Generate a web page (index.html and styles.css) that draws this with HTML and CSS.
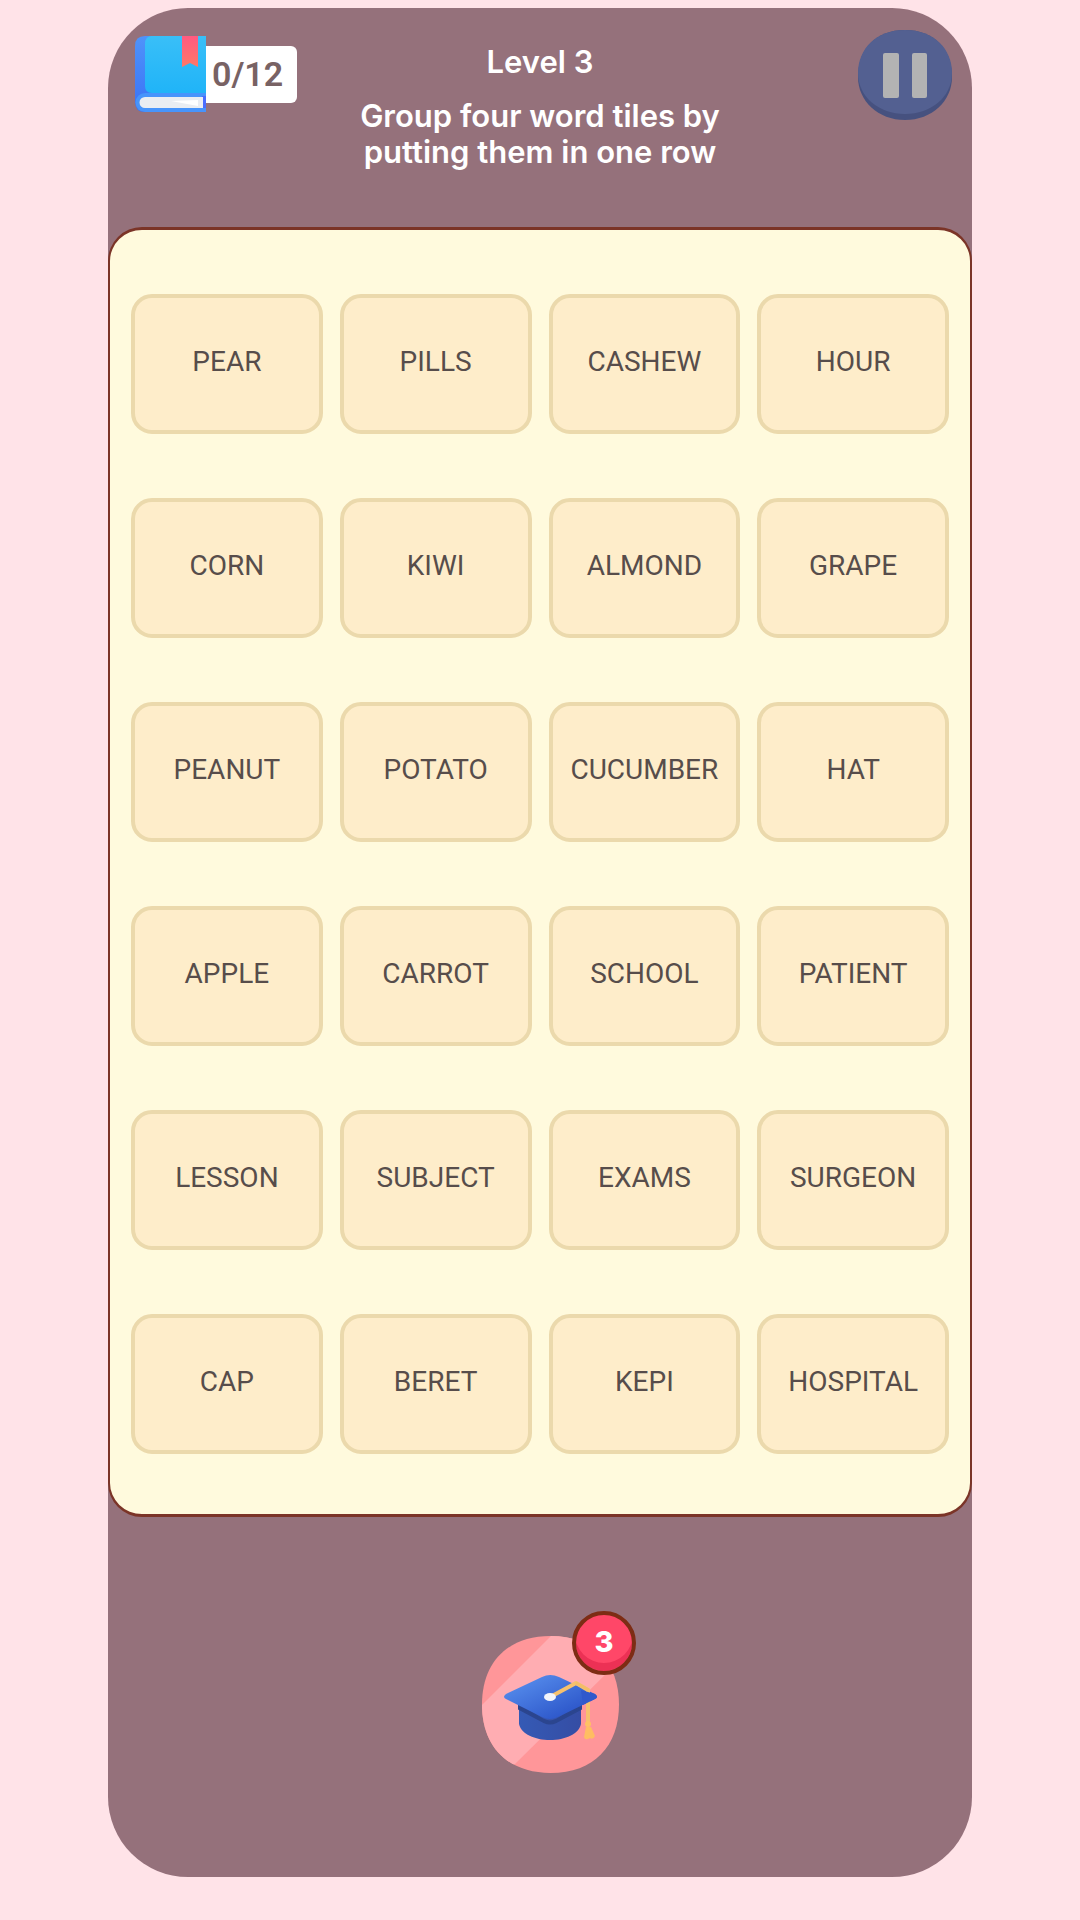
FILE: index.html
```html
<!DOCTYPE html>
<html lang="en">
<head>
  <meta charset="UTF-8">
  <meta name="viewport" content="width=device-width, initial-scale=1.0">
  <title>Word Groups</title>
  <link rel="stylesheet" href="styles.css">
</head>
<body>

  <main class="game">
    <header class="header">
      <div class="counter">
        <svg class="book" viewBox="0 0 71 76" aria-hidden="true">
          <defs>
            <linearGradient id="spine" x1="0" y1="0" x2="0" y2="1">
              <stop offset="0" stop-color="#4f93fa"/>
              <stop offset="1" stop-color="#3a72f5"/>
            </linearGradient>
            <linearGradient id="cover" x1="0" y1="0" x2="0" y2="1">
              <stop offset="0" stop-color="#39bff8"/>
              <stop offset="1" stop-color="#20b4f8"/>
            </linearGradient>
            <linearGradient id="ribbon" x1="0" y1="0" x2="0" y2="1">
              <stop offset="0" stop-color="#ff5a80"/>
              <stop offset="1" stop-color="#ff7868"/>
            </linearGradient>
          </defs>
          <path d="M10 0H71V76H10Q0 76 0 66V10Q0 0 10 0Z" fill="url(#spine)"/>
          <path d="M10 57H71V76H10A9.500 9.500 0 0 1 10 57Z" fill="#4794fb"/>
          <path d="M17 0H71V57H17Q10 57 10 50V8Q10 0 17 0Z" fill="url(#cover)"/>
          <path d="M67 60H71V72H67Z" fill="#4a6dff"/>
          <path d="M10 61H68V72H10A5.500 5.500 0 0 1 10 61Z" fill="#eaedf2"/>
          <path d="M36 65L63 64V70Z" fill="#fff"/>
          <path d="M47 0H63V31L55 27L47 31Z" fill="url(#ribbon)"/>
        </svg>
        <span class="count">0/12</span>
      </div>

      <div class="intro">
        <h1>Level 3</h1>
        <p>Group four word tiles by<br>putting them in one row</p>
      </div>

      <button class="pause" type="button" aria-label="Pause">
        <svg viewBox="0 0 94 90" aria-hidden="true">
          <path d="M47 0C76 0 94 19 94 47C94 71 74 90 47 90S0 71 0 47C0 19 18 0 47 0Z" fill="#46517f"/>
          <path d="M47 0C76 0 94 19 94 43C94 67 73 84 47 84S0 67 0 43C0 19 18 0 47 0Z" fill="#536091"/>
          <rect x="25" y="23" width="16" height="45" rx="2" fill="#b3b3b3"/>
          <rect x="54" y="23" width="15" height="45" rx="2" fill="#b3b3b3"/>
        </svg>
      </button>
    </header>

    <section class="board">
      <button class="tile" type="button">PEAR</button>
      <button class="tile" type="button">PILLS</button>
      <button class="tile" type="button">CASHEW</button>
      <button class="tile" type="button">HOUR</button>

      <button class="tile" type="button">CORN</button>
      <button class="tile" type="button">KIWI</button>
      <button class="tile" type="button">ALMOND</button>
      <button class="tile" type="button">GRAPE</button>

      <button class="tile" type="button">PEANUT</button>
      <button class="tile" type="button">POTATO</button>
      <button class="tile" type="button">CUCUMBER</button>
      <button class="tile" type="button">HAT</button>

      <button class="tile" type="button">APPLE</button>
      <button class="tile" type="button">CARROT</button>
      <button class="tile" type="button">SCHOOL</button>
      <button class="tile" type="button">PATIENT</button>

      <button class="tile" type="button">LESSON</button>
      <button class="tile" type="button">SUBJECT</button>
      <button class="tile" type="button">EXAMS</button>
      <button class="tile" type="button">SURGEON</button>

      <button class="tile" type="button">CAP</button>
      <button class="tile" type="button">BERET</button>
      <button class="tile" type="button">KEPI</button>
      <button class="tile" type="button">HOSPITAL</button>
    </section>

    <footer class="footer">
      <button class="hint" type="button" aria-label="Hint, 3 left">
        <svg class="cap" viewBox="0 0 137 137" aria-hidden="true">
          <defs>
            <clipPath id="round">
              <path d="M68.500 0C112 0 137 27 137 68.500S112 137 68.500 137S0 110 0 68.500S25 0 68.500 0Z"/>
            </clipPath>
            <linearGradient id="top" x1="0" y1="0" x2="1" y2="1">
              <stop offset="0.200" stop-color="#5186e8"/>
              <stop offset="0.800" stop-color="#2d57ca"/>
            </linearGradient>
            <linearGradient id="base" x1="0" y1="0" x2="1" y2="0">
              <stop offset="0" stop-color="#355ab5"/>
              <stop offset="1" stop-color="#354da4"/>
            </linearGradient>
          </defs>
          <g clip-path="url(#round)">
            <rect width="137" height="137" fill="#ff9699"/>
            <path d="M0 69L69 0H137V25L33 128L0 137Z" fill="#ffadb2"/>
          </g>
          <path d="M37 62H99V88C97 98 83 104 68 104S39 98 37 88Z" fill="url(#base)"/>
          <path d="M37 69L62 84Q68 87 74 84L99 69V73L74 86Q68 89 62 86L37 73Z" fill="#2b458f" stroke="#2b458f" stroke-width="2"/>
          <path d="M24 58L60 41Q68 37 77 41L113 58Q117 61 113 63L76 81Q68 85 60 81L24 63Q20 61 24 58Z" fill="url(#top)"/>
          <path d="M70 60L94 47L106 54V88" fill="none" stroke="#f6c16d" stroke-width="4" stroke-linejoin="round"/>
          <path d="M99 54L113 58Q117 61 113 63L101 69Z" fill="#3059cc"/>
          <path d="M94 47L107 54" stroke="#f2bd69" stroke-width="3"/>
          <circle cx="106" cy="88" r="3" fill="#ffc164"/>
          <path d="M104 91H109L113 100Q111 104 108 102Q103 105 102 101Z" fill="#ffbd62"/>
          <ellipse cx="68" cy="61" rx="6" ry="4" fill="#f1f4fb"/>
        </svg>
        <span class="badge">3</span>
      </button>
    </footer>
  </main>

</body>
</html>
```
FILE: styles.css
```css
* {
  box-sizing: border-box;
  margin: 0;
  padding: 0;
}

body {
  min-height: 100vh;
  padding: 8px 10% 43px;
  display: flex;
  background: #ffe3e8;
  font-family: Roboto, "Liberation Sans", sans-serif;
}

button {
  border: none;
  background: none;
  font-family: inherit;
  cursor: pointer;
}

svg {
  display: block;
}

.game {
  flex: 1;
  min-width: 0;
  display: flex;
  flex-direction: column;
  background: #95717b;
  border-radius: 80px;
}

/* Header */
.header {
  display: grid;
  grid-template-columns: 1fr auto 1fr;
  align-items: start;
  padding: 22px 20px 57px;
  color: #fff;
}

.counter {
  display: flex;
  align-items: center;
  padding: 6px 0 0 7px;
}

.book {
  width: 71px;
  height: 76px;
}

.count {
  padding: 0 14px 0 6px;
  background: #fff;
  border-radius: 0 6px 6px 0;
  color: #786264;
  font-size: 34px;
  font-weight: 600;
  line-height: 57px;
}

.intro {
  padding-top: 14px;
  text-align: center;
  font-family: Inter, Roboto, sans-serif;
  font-size: 31px;
  font-weight: 600;
  line-height: 36px;
}

.intro h1 {
  margin-bottom: 18px;
  font-size: inherit;
  font-weight: inherit;
}

.pause {
  justify-self: end;
  width: 94px;
  height: 90px;
}

/* Word tiles */
.board {
  display: grid;
  grid-template-columns: repeat(4, 1fr);
  grid-auto-rows: 140px;
  gap: 64px 17px;
  padding: 64px 21px 60px;
  background: #fffadd;
  border: 3px solid #7b3427;
  border-width: 3px 2px;
  border-radius: 34px;
}

.tile {
  padding-bottom: 6px;
  background: #feedca;
  border: 4px solid #ebd9ac;
  border-radius: 21px;
  color: #574d4b;
  font-size: 28px;
}

/* Hint */
.footer {
  flex: 1;
  display: flex;
  justify-content: center;
  align-items: flex-start;
  padding: 119px 0 103px 21px;
}

.hint {
  position: relative;
  width: 137px;
  height: 137px;
}

.badge {
  position: absolute;
  top: -25px;
  right: -17px;
  width: 64px;
  height: 64px;
  background: #ff4768;
  border: 4px solid #7d2c14;
  border-radius: 50%;
  box-shadow: inset 0 -9px 0 -1px #ec3155;
  color: #fff;
  font-family: Inter, sans-serif;
  font-size: 29px;
  font-weight: 800;
  line-height: 54px;
}
```
